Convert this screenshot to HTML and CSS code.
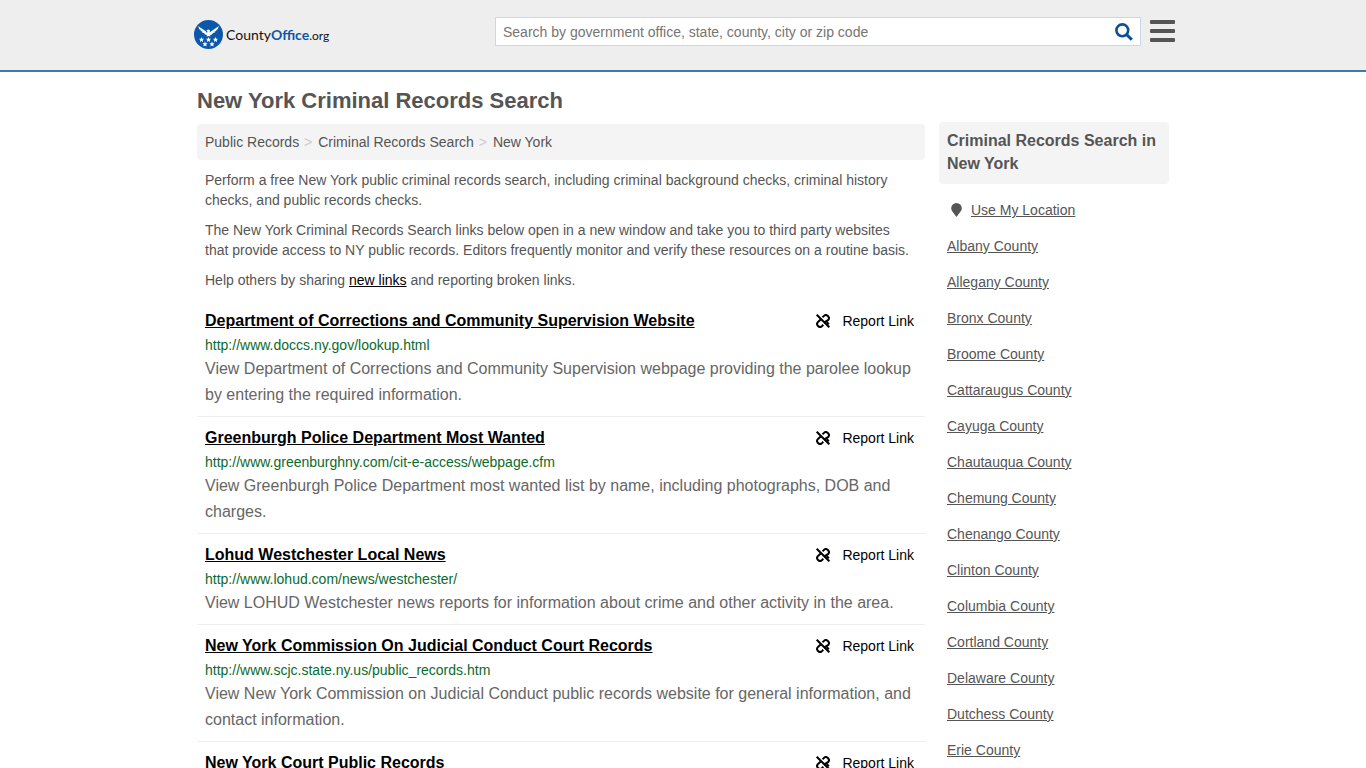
FILE: index.html
```html
<!DOCTYPE html>
<html lang="en">
<head>
    <meta charset="UTF-8">
    <meta name="viewport" content="width=device-width, initial-scale=1.0">
    <title>New York Criminal Records Search</title>
    <link rel="stylesheet" href="styles.css">
</head>
<body>
    <!-- Shared icons -->
    <svg class="icon-defs" aria-hidden="true">
        <symbol id="unlink" viewBox="0 0 14 14">
            <g fill="none" stroke="currentColor" stroke-width="2">
                <path d="M.7.700L13.300 13.300"/>
                <path d="M6.500 3.300L7.700 2.100A2.900 2.900 0 0 1 12 6.200L7.900 8.700"/>
                <path d="M4.700 5.400L2 7.900A2.900 2.900 0 0 0 6.100 12L7.300 10.800"/>
                <path d="M10.600 8L12.900 10.200"/>
            </g>
        </symbol>
    </svg>
    <header class="header">
        <div class="header-inner">
            <a href="#" class="logo">
                <svg class="logo-mark" viewBox="0 0 58 58" aria-hidden="true">
                    <circle cx="29" cy="29" r="29" fill="#0b57a8"/>
                    <g fill="#fff">
                        <path d="M8 12L23 22L26 26L27 23L25 21L28 19L32 20L31 25L35 22L50 12L47 19L44 20L45 22L41 23L42 25L38 26L36 29L32 30L33 33L29 32L25 33L26 30L22 29L20 26L16 25L17 23L13 22L14 20L11 19Z"/>
                        <path id="star" d="M15 34l1.500 3.300 3.700.4-2.700 2.500.7 3.700-3.200-1.800-3.200 1.800.7-3.700-2.700-2.500 3.700-.4z"/>
                        <use href="#star" x="14"/>
                        <use href="#star" x="28"/>
                        <use href="#star" x="7" y="9"/>
                        <use href="#star" x="21" y="9"/>
                    </g>
                </svg>
                <span class="logo-text">County<b>Office</b><small>.org</small></span>
            </a>
            <form class="search">
                <input type="text" class="search-input" aria-label="Search" placeholder="Search by government office, state, county, city or zip code">
                <button type="button" class="search-btn" aria-label="Submit search">
                    <svg viewBox="0 0 18 18" aria-hidden="true"><g fill="none" stroke="#0b4f96"><circle cx="7.300" cy="7.300" r="5.900" stroke-width="2.600"/><path d="M11.800 11.800L16.800 16.800" stroke-width="3"/></g></svg>
                </button>
            </form>
            <button type="button" class="menu-btn" aria-label="Menu"><span></span><span></span><span></span></button>
        </div>
    </header>

    <div class="container">
        <main class="main">
            <h1>New York Criminal Records Search</h1>
            <nav class="breadcrumb" aria-label="Breadcrumb">
                <a href="#">Public Records</a>
                <a href="#">Criminal Records Search</a>
                <a href="#">New York</a>
            </nav>
            <div class="intro">
                <p>Perform a free New York public criminal records search, including criminal background checks, criminal history checks, and public records checks.</p>
                <p>The New York Criminal Records Search links below open in a new window and take you to third party websites that provide access to NY public records. Editors frequently monitor and verify these resources on a routine basis.</p>
                <p>Help others by sharing <a href="#">new links</a> and reporting broken links.</p>
            </div>

            <article class="result">
                <div class="result-top">
                    <h2><a href="#">Department of Corrections and Community Supervision Website</a></h2>
                    <a href="#" class="report"><svg aria-hidden="true"><use href="#unlink"/></svg>Report Link</a>
                </div>
                <div class="result-url">http://www.doccs.ny.gov/lookup.html</div>
                <p>View Department of Corrections and Community Supervision webpage providing the parolee lookup by entering the required information.</p>
            </article>
            <article class="result">
                <div class="result-top">
                    <h2><a href="#">Greenburgh Police Department Most Wanted</a></h2>
                    <a href="#" class="report"><svg aria-hidden="true"><use href="#unlink"/></svg>Report Link</a>
                </div>
                <div class="result-url">http://www.greenburghny.com/cit-e-access/webpage.cfm</div>
                <p>View Greenburgh Police Department most wanted list by name, including photographs, DOB and charges.</p>
            </article>
            <article class="result">
                <div class="result-top">
                    <h2><a href="#">Lohud Westchester Local News</a></h2>
                    <a href="#" class="report"><svg aria-hidden="true"><use href="#unlink"/></svg>Report Link</a>
                </div>
                <div class="result-url">http://www.lohud.com/news/westchester/</div>
                <p>View LOHUD Westchester news reports for information about crime and other activity in the area.</p>
            </article>
            <article class="result">
                <div class="result-top">
                    <h2><a href="#">New York Commission On Judicial Conduct Court Records</a></h2>
                    <a href="#" class="report"><svg aria-hidden="true"><use href="#unlink"/></svg>Report Link</a>
                </div>
                <div class="result-url">http://www.scjc.state.ny.us/public_records.htm</div>
                <p>View New York Commission on Judicial Conduct public records website for general information, and contact information.</p>
            </article>
            <article class="result">
                <div class="result-top">
                    <h2><a href="#">New York Court Public Records</a></h2>
                    <a href="#" class="report"><svg aria-hidden="true"><use href="#unlink"/></svg>Report Link</a>
                </div>
            </article>
        </main>

        <aside class="sidebar">
            <h2>Criminal Records Search in New York</h2>
            <ul>
                <li><svg class="pin" viewBox="0 0 11 14" aria-hidden="true"><path fill="#555" d="M5.500 0A5.300 5.300 0 0 1 10.800 5.300C10.800 8 8 10.500 5.500 14C3 10.500.2 8 .2 5.300A5.300 5.300 0 0 1 5.500 0Z"/></svg><a href="#">Use My Location</a></li>
                <li><a href="#">Albany County</a></li>
                <li><a href="#">Allegany County</a></li>
                <li><a href="#">Bronx County</a></li>
                <li><a href="#">Broome County</a></li>
                <li><a href="#">Cattaraugus County</a></li>
                <li><a href="#">Cayuga County</a></li>
                <li><a href="#">Chautauqua County</a></li>
                <li><a href="#">Chemung County</a></li>
                <li><a href="#">Chenango County</a></li>
                <li><a href="#">Clinton County</a></li>
                <li><a href="#">Columbia County</a></li>
                <li><a href="#">Cortland County</a></li>
                <li><a href="#">Delaware County</a></li>
                <li><a href="#">Dutchess County</a></li>
                <li><a href="#">Erie County</a></li>
            </ul>
        </aside>
    </div>
</body>
</html>
```
FILE: styles.css
```css
* {
    box-sizing: border-box;
}
body {
    margin: 0;
    font-family: "Liberation Sans", Arial, sans-serif;
    font-size: 14px;
    line-height: 20px;
    color: #555;
    background: #fff;
}
h1, h2, p, ul {
    margin: 0;
    padding: 0;
}
a {
    color: inherit;
}
button {
    padding: 0;
    border: none;
    background: none;
    cursor: pointer;
}
.icon-defs {
    display: none;
}
/* Header */
.header {
    background: #eee;
    border-bottom: 2px solid #337ab7;
}
.header-inner {
    display: flex;
    align-items: flex-start;
    max-width: 984px;
    height: 70px;
    margin: 0 auto;
    padding: 17px 0 0 3px;
}
.logo {
    display: flex;
    align-items: center;
    gap: 3px;
    margin-top: 3px;
    color: #111;
    text-decoration: none;
}
.logo-mark {
    width: 29px;
    height: 29px;
}
.logo-text {
    padding-top: 2px;
    font-family: Lato, sans-serif;
    font-size: 14px;
}
.logo-text b {
    color: #0b57a8;
}
.logo-text small {
    font-size: 12px;
}
.search {
    display: flex;
    flex: 0 1 646px;
    height: 29px;
    margin-left: auto;
    background: #fff;
    border: 1px solid #c5d9ea;
}
.search-input {
    flex: 1;
    min-width: 0;
    padding: 0 7px;
    border: none;
    background: none;
    font: inherit;
    color: #555;
}
.search-input::placeholder {
    color: #757575;
}
.search-btn {
    width: 32px;
}
.search-btn svg {
    display: block;
    width: 18px;
    height: 18px;
    margin: 1px auto 0;
}
.menu-btn {
    display: flex;
    flex-direction: column;
    gap: 5px;
    width: 25px;
    margin: 3px 0 0 9px;
}
.menu-btn span {
    width: 100%;
    height: 4px;
    border-radius: 1px;
    background: #555;
}
/* Page columns */
.container {
    display: flex;
    gap: 14px;
    max-width: 972px;
    margin: 0 auto;
}
.main {
    flex: 1;
    min-width: 0;
}
h1 {
    padding: 15px 0 9px;
    font-size: 22px;
    line-height: 28px;
}
.breadcrumb {
    padding: 8px;
    border-radius: 4px;
    background: #f4f4f4;
}
.breadcrumb a {
    text-decoration: none;
}
.breadcrumb a + a::before {
    content: ">";
    padding: 0 6px 0 1px;
    color: #ccc;
}
.intro {
    padding: 10px 8px 0;
}
.intro p {
    margin-bottom: 10px;
}
.intro a {
    color: #000;
}
/* Results */
.result {
    padding: 9px 8px 8px;
    border-bottom: 1px solid #eee;
}
.result-top {
    display: flex;
    justify-content: space-between;
    line-height: 24px;
    color: #000;
}
.result h2 {
    font-size: 16px;
    line-height: 24px;
}
.report {
    display: flex;
    align-items: center;
    gap: 12px;
    padding-right: 3px;
    text-decoration: none;
}
.report svg {
    width: 14px;
    height: 14px;
}
.result-url {
    margin: 2px 0 1px;
    color: #0a6b2d;
}
.result p {
    font-size: 16px;
    line-height: 26px;
    color: #666;
}
/* Sidebar */
.sidebar {
    flex: 0 0 230px;
    padding-top: 50px;
}
.sidebar h2 {
    padding: 7px 8px 9px;
    border-radius: 4px;
    background: #f4f4f4;
    font-size: 16px;
    line-height: 23px;
}
.sidebar ul {
    padding: 8px;
    list-style: none;
}
.sidebar li {
    display: flex;
    align-items: center;
    height: 36px;
}
.pin {
    width: 11px;
    height: 14px;
    margin: 0 9px 0 4px;
}
```
